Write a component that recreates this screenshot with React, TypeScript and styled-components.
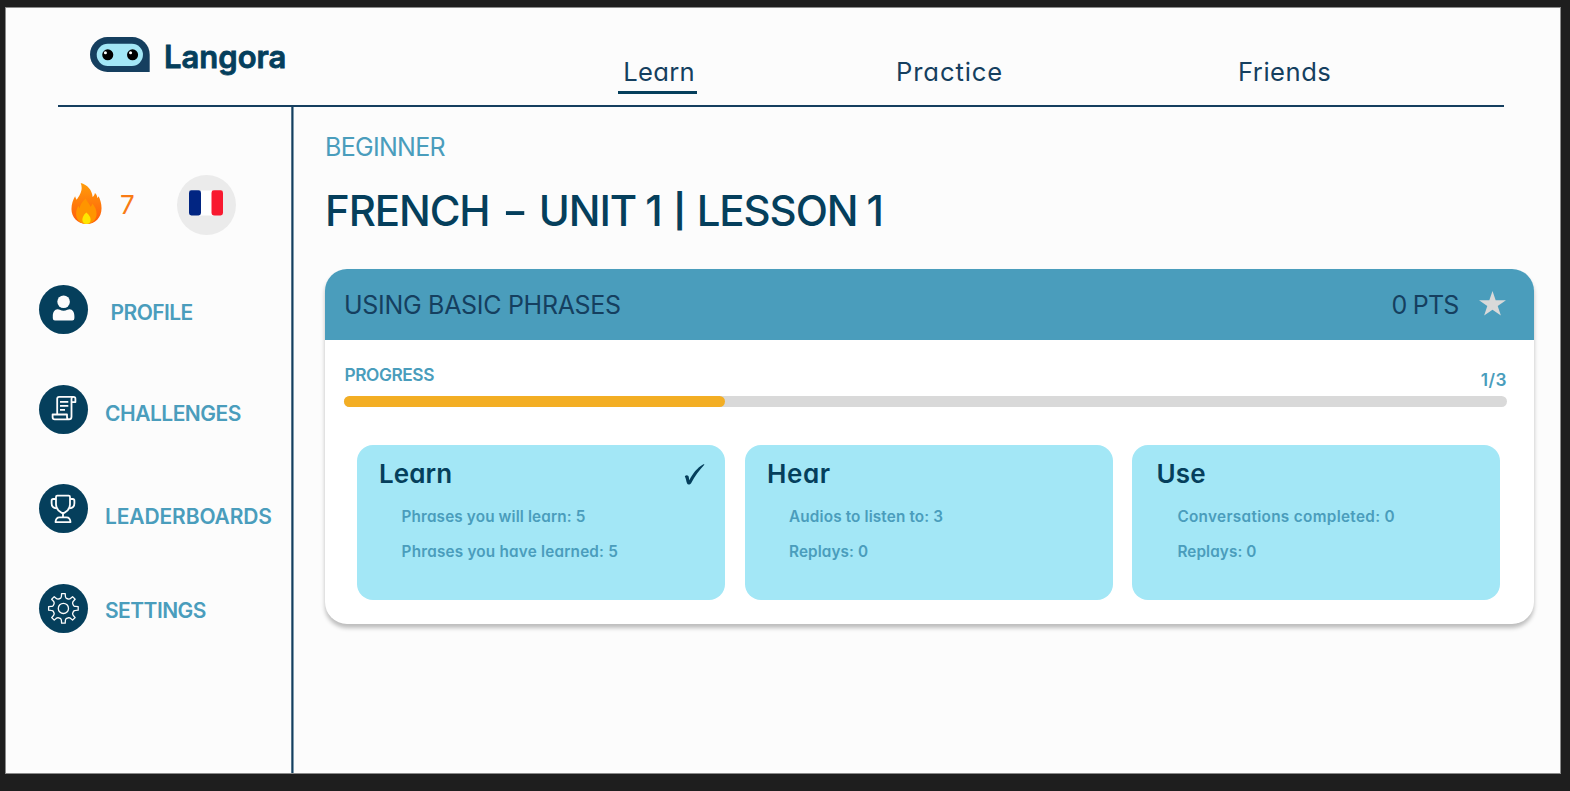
import React from "react";
import styled, { createGlobalStyle } from "styled-components";

const navy = "#053f5c";
const ink = "#153f5f";
const teal = "#4a9dbc";
const sky = "#a3e7f6";

const GlobalStyle = createGlobalStyle`
  * { box-sizing: border-box; }
  body {
    margin: 0;
    background: #1e1e1e;
    font-family: Inter, "Open Sans", sans-serif;
    font-feature-settings: "cv11";
  }
  h1, h2, p { margin: 0; }
`;

const Frame = styled.div`
  height: 791px;
  padding: 7px 9px 17px 5px;
`;
const Page = styled.div`
  display: flex;
  flex-direction: column;
  height: 767px;
  background: #fcfcfc;
  border: 1px solid #8b8b8b;
`;
const Header = styled.header`
  display: flex;
  height: 99px;
  margin: 0 56px 0 52px;
  padding-left: 32px;
  border-bottom: 2px solid ${ink};
`;
const Brand = styled.div`
  display: flex;
  width: 528px;
  padding-top: 29px;
  gap: 14px;
`;
const Wordmark = styled.span`
  font-size: 31px;
  line-height: 40px;
  font-weight: 600;
  font-feature-settings: normal;
  color: ${navy};
  -webkit-text-stroke: 0.8px ${navy};
`;
const Nav = styled.nav`
  display: grid;
  grid-template-columns: 278px 342px auto;
  align-items: start;
  padding-top: 48px;
`;
const NavItem = styled.a<{ $active?: boolean; $ls: number }>`
  justify-self: start;
  height: 38px;
  min-width: 79px;
  padding-left: ${(p) => (p.$active ? 5.3 : 0)}px;
  border-bottom: 3px solid ${(p) => (p.$active ? navy : "transparent")};
  font-size: 25.6px;
  line-height: 32px;
  color: ${ink};
  letter-spacing: ${(p) => p.$ls}px;
`;
const Body = styled.div`
  display: flex;
  flex: 1;
  min-height: 0;
`;
const Sidebar = styled.aside`
  width: 285px;
  padding: 68px 0 0 33px;
`;
const Divider = styled.div`
  width: 3px;
  background: linear-gradient(90deg, #56768c 0 1px, ${ink} 1px 2px, #7f9bad 2px 3px);
`;
const Stats = styled.div`
  display: flex;
  align-items: center;
  height: 60px;
  padding-left: 32px;
`;
const Streak = styled.span`
  width: 57px;
  margin: 0 0 2px 18px;
  font-size: 26px;
  color: #f97b14;
`;
const FlagBadge = styled.div`
  display: flex;
  justify-content: center;
  width: 59px;
  height: 60px;
  padding: 15px 1px 0 0;
  border-radius: 50%;
  background: #ebebeb;
`;
const Menu = styled.div`
  display: flex;
  flex-direction: column;
  gap: 50.5px;
  padding-top: 50.4px;
`;
const MenuItem = styled.a`
  display: flex;
  height: 49px;
`;
const Disc = styled.span`
  width: 49px;
  height: 49px;
  border-radius: 50%;
  background: ${navy};
`;
const MenuLabel = styled.span<{ $left: number; $top: number; $ls: number }>`
  margin: ${(p) => p.$top}px 0 0 ${(p) => p.$left}px;
  font-size: 21px;
  line-height: 24px;
  font-weight: 600;
  color: ${teal};
  letter-spacing: ${(p) => p.$ls}px;
  white-space: nowrap;
`;
const Main = styled.main`
  width: 1240px;
  padding: 24px 0 0 31px;
`;
const Level = styled.p`
  font-size: 25px;
  line-height: 32px;
  color: ${teal};
  letter-spacing: -0.7px;
`;
const Title = styled.h1`
  margin-top: 22px;
  font-size: 42px;
  line-height: 52px;
  font-weight: 500;
  color: ${navy};
  letter-spacing: -1.1px;
  word-spacing: -1px;
  white-space: nowrap;
`;
const Dash = styled.span`
  display: inline-block;
  width: 31px;
  text-align: center;
  transform: scaleX(1.35);
`;
const Bar = styled.span`
  display: inline-block;
  width: 17px;
  font-size: 33px;
  line-height: 40px;
  font-weight: 700;
  text-align: center;
  vertical-align: 3px;
`;
const Card = styled.section`
  height: 355px;
  margin-top: 32px;
  border-radius: 22px;
  background: #fff;
  box-shadow: 0 4px 4px rgba(0, 0, 0, 0.25);
`;
const CardHead = styled.div`
  display: flex;
  align-items: center;
  height: 71px;
  padding: 0 28px 0 19px;
  border-radius: 22px 22px 0 0;
  background: ${teal};
  font-size: 25px;
  color: ${ink};
`;
const CardName = styled.span`
  flex: 1;
  letter-spacing: -0.3px;
`;
const Points = styled.span`
  margin-right: 20.5px;
  letter-spacing: -0.8px;
`;
const CardBody = styled.div`
  padding: 24px 27px 0 19.4px;
`;
const ProgressRow = styled.div`
  display: flex;
  justify-content: space-between;
  height: 32px;
  font-size: 17.3px;
  line-height: 22px;
  font-weight: 600;
  color: ${teal};
`;
const ProgressLabel = styled.span`
  letter-spacing: -0.4px;
`;
const ProgressCount = styled.span`
  padding-top: 5px;
  letter-spacing: 0.5px;
`;
const Track = styled.div`
  height: 11px;
  border-radius: 6px;
  background: #d9d9d9;
`;
const Fill = styled.div`
  width: 381px;
  height: 11px;
  border-radius: 6px;
  background: #f3ae24;
`;
const Tiles = styled.div`
  display: grid;
  grid-template-columns: repeat(3, 368px);
  gap: 19.5px;
  padding: 38px 0 0 13px;
`;
const Tile = styled.div<{ $pad: number }>`
  height: 155px;
  padding: 12px 20px 0 ${(p) => p.$pad}px;
  border-radius: 16px;
  background: ${sky};
`;
const TileHead = styled.div`
  display: flex;
  justify-content: space-between;
  height: 34px;
  line-height: 34px;
  color: ${navy};
`;
const TileName = styled.h2<{ $ls: number }>`
  font-size: 26px;
  font-weight: 600;
  letter-spacing: ${(p) => p.$ls}px;
`;
const Facts = styled.div<{ $indent: number }>`
  padding: 11.5px 0 0 ${(p) => p.$indent}px;
`;
const Fact = styled.p<{ $ls: number }>`
  font-size: 15.3px;
  line-height: 27px;
  margin-bottom: 8.6px;
  font-weight: 600;
  color: ${teal};
  letter-spacing: ${(p) => p.$ls}px;
  white-space: nowrap;
`;

const LogoMark = styled.svg`
  margin-top: 0.3px;
`;
const Logo = () => (
  <LogoMark width="60" height="35" viewBox="271 112 179 104">
    <path d="M323 112h74a52 52 0 0 1 52 52v52H323a52 52 0 0 1 0-104z" fill={ink} />
    <rect x="291" y="132" width="138" height="66" rx="33" fill={sky} />
    <circle cx="324" cy="165" r="16.5" />
    <circle cx="398" cy="165" r="16.5" />
    <circle cx="317" cy="159" r="4.5" fill="#fff" />
    <circle cx="392" cy="159" r="4.5" fill="#fff" />
  </LogoMark>
);

const FlameMark = styled.svg`
  margin-bottom: 3.6px;
`;
const Flame = () => (
  <FlameMark width="31" height="41" viewBox="125 68 91 124">
    <defs>
      <linearGradient id="flame" x1="0" y1="0" x2="0" y2="1">
        <stop offset="0" stopColor="#ff9d0a" />
        <stop offset="1" stopColor="#ff5a0c" />
      </linearGradient>
    </defs>
    <path fill="url(#flame)" d="M153 68c20 6 34 20 36 42 4-3 6-7 7-12 5 4 7 9 7 15 2-1 3-3 4-5 5 10 9 22 9 36 0 28-19 48-46 48s-45-20-45-45c0-16 5-28 11-39 1 4 3 8 5 11 10-17 20-29 12-51z" />
    <path fill="#ff9500" d="M168 115c4 10 11 14 15 25 3-3 4-6 5-10 8 9 13 20 13 31 0 18-12 31-31 31s-31-13-31-30c0-10 3-19 7-25 1 3 2 5 4 7 2-14 10-20 18-29z" />
    <path fill="#ffe600" d="M170 157c8 7 13 14 13 22s-5 13-13 13-12-6-12-13 4-16 12-22z" />
  </FlameMark>
);

const Flag = () => (
  <svg width="34" height="26" viewBox="0 0 34 26">
    <rect x="8" y="0.5" width="18" height="25" fill="#fff" />
    <rect x="0" y="0.3" width="12" height="25.2" rx="2.4" fill="#012582" />
    <rect x="22.5" y="0.3" width="11.5" height="25.2" rx="2.4" fill="#f8192f" />
  </svg>
);

const StarMark = styled.svg`
  margin-bottom: 2px;
`;
const Star = () => (
  <StarMark width="27" height="25" viewBox="0 0 28 26">
    <path fill="#d9d9d9" d="M14 0l3.3 9.7H28l-8.6 6 3.3 9.8L14 19.6l-8.7 5.9 3.3-9.8L0 9.7h10.7z" />
  </StarMark>
);

const Check = () => (
  <svg width="21" height="34" viewBox="0 0 21 34">
    <path fill={navy} d="M0.8 19.3c1.6-1.7 3.7-1 4 .9l.5 3.1C8.7 16.6 13 10.9 19.4 7.3c.8-.4 1.2.1.7.7-4.7 4.8-9.2 11.3-13 18.2-.8 1.500-3.400 2-4 .4C2.100 24.100 2 21.300.800 19.300z" />
  </svg>
);

const ProfileIcon = () => (
  <svg width="49" height="49" viewBox="0 0 49 49" fill="#fcfcfc">
    <circle cx="24.6" cy="16.7" r="6.3" />
    <path d="M18.6 24.2q1.2 0 2.2.6 3.8 1.8 7.6 0 1-.6 2.2-.6c3 0 4.8 3 4.8 7v2q0 2.2-2.2 2.2H16q-2.2 0-2.2-2.2v-2c0-4 1.8-7 4.8-7z" />
  </svg>
);

const ScrollIcon = () => (
  <svg width="49" height="49" viewBox="0 0 49 49" fill="none" stroke="#fcfcfc" strokeWidth="1.8" strokeLinejoin="round">
    <path d="M18.2 29.3V13.8q0-2 2-2h14.3q1.9 0 1.9 1.9v3.4h-3.9" />
    <path d="M34.5 11.8q-2 0-2 2v18q0 2.6-2.5 2.6H15.8q-2.2 0-2.2-2.4v-2.5H28v2.4q0 2.3 2 2.5" />
    <path d="M21 16.8h8.3M21 20.8h8.3M21 24.8h5" />
  </svg>
);

const TrophyIcon = () => (
  <svg width="49" height="49" viewBox="0 0 49 49" fill="none" stroke="#fcfcfc" strokeWidth="1.8" strokeLinejoin="round">
    <path d="M18.3 11.6h11.4q1.3 0 1.3 1.3v7.7c0 4-2.2 6.3-5.4 8q-1.6.8-3.2 0c-3.2-1.7-5.4-4-5.4-8v-7.7q0-1.300 1.300-1.300z" />
    <path d="M17 15h-2.700q-1.700 0-1.700 1.700v2.500c0 3 1.700 4.700 5 5.200M31 15h2.700q1.700 0 1.700 1.700v2.500c0 3-1.700 4.700-5 5.200" />
    <path d="M24 29v4.300M20.500 33.300h7q3.700 0 4 4.800h-15q.3-4.800 4-4.800z" />
  </svg>
);

// Eight flared teeth around the hub, each spanning 45 degrees.
const gearPath = (() => {
  const at = (r: number, deg: number) => {
    const a = ((deg - 90) * Math.PI) / 180;
    return `${(24.4 + r * Math.cos(a)).toFixed(2)} ${(24.4 + r * Math.sin(a)).toFixed(2)}`;
  };
  let d = "";
  for (let i = 0; i < 8; i++) {
    const c = i * 45;
    d += `${i ? "L" : "M"}${at(10.6, c - 15)}Q${at(11.4, c - 10)} ${at(12.5, c - 9)}L${at(14.9, c - 7)}L${at(14.9, c + 7)}L${at(12.5, c + 9)}Q${at(11.4, c + 10)} ${at(10.6, c + 15)}Q${at(10.3, c + 22.5)} ${at(10.6, c + 30)}`;
  }
  return d + "Z";
})();
const GearIcon = () => (
  <svg width="49" height="49" viewBox="0 0 49 49" fill="none" stroke="#fcfcfc" strokeWidth="1.3" strokeLinejoin="round">
    <path d={gearPath} />
    <circle cx="24.4" cy="24.4" r="5.1" />
  </svg>
);

const menu = [
  { label: "PROFILE", icon: <ProfileIcon />, left: 22.5, top: 15.6, ls: -0.55 },
  { label: "CHALLENGES", icon: <ScrollIcon />, left: 17, top: 17.2, ls: -0.5 },
  { label: "LEADERBOARDS", icon: <TrophyIcon />, left: 17, top: 20.6, ls: -0.13 },
  { label: "SETTINGS", icon: <GearIcon />, left: 17, top: 15.4, ls: -0.55 },
];

interface TileData {
  name: string;
  done?: boolean;
  pad: number;
  indent: number;
  ls: number;
  facts: { text: string; ls: number }[];
}
const tiles: TileData[] = [
  {
    name: "Learn", done: true, pad: 21.5, indent: 22.7, ls: 0.1,
    facts: [{ text: "Phrases you will learn: 5", ls: 0.13 }, { text: "Phrases you have learned: 5", ls: 0.2 }],
  },
  {
    name: "Hear", pad: 22.2, indent: 22, ls: 0.6,
    facts: [{ text: "Audios to listen to: 3", ls: 0.14 }, { text: "Replays: 0", ls: 0.1 }],
  },
  {
    name: "Use", pad: 24.2, indent: 20.8, ls: 0.1,
    facts: [{ text: "Conversations completed: 0", ls: 0.33 }, { text: "Replays: 0", ls: 0.1 }],
  },
];

export default function App() {
  return (
    <Frame>
      <GlobalStyle />
      <Page>
        <Header>
          <Brand>
            <Logo />
            <Wordmark>Langora</Wordmark>
          </Brand>
          <Nav>
            <NavItem $active $ls={0.3}>Learn</NavItem>
            <NavItem $ls={0.9}>Practice</NavItem>
            <NavItem $ls={0.5}>Friends</NavItem>
          </Nav>
        </Header>
        <Body>
          <Sidebar>
            <Stats>
              <Flame />
              <Streak>7</Streak>
              <FlagBadge><Flag /></FlagBadge>
            </Stats>
            <Menu>
              {menu.map((m) => (
                <MenuItem key={m.label}>
                  <Disc>{m.icon}</Disc>
                  <MenuLabel $left={m.left} $top={m.top} $ls={m.ls}>{m.label}</MenuLabel>
                </MenuItem>
              ))}
            </Menu>
          </Sidebar>
          <Divider />
          <Main>
            <Level>BEGINNER</Level>
            <Title>FRENCH <Dash>-</Dash> UNIT 1 <Bar>|</Bar> LESSON 1</Title>
            <Card>
              <CardHead>
                <CardName>USING BASIC PHRASES</CardName>
                <Points>0 PTS</Points>
                <Star />
              </CardHead>
              <CardBody>
                <ProgressRow>
                  <ProgressLabel>PROGRESS</ProgressLabel>
                  <ProgressCount>1/3</ProgressCount>
                </ProgressRow>
                <Track><Fill /></Track>
                <Tiles>
                  {tiles.map((t) => (
                    <Tile key={t.name} $pad={t.pad}>
                      <TileHead>
                        <TileName $ls={t.ls}>{t.name}</TileName>
                        {t.done && <Check />}
                      </TileHead>
                      <Facts $indent={t.indent}>
                        {t.facts.map((f) => (
                          <Fact key={f.text} $ls={f.ls}>{f.text}</Fact>
                        ))}
                      </Facts>
                    </Tile>
                  ))}
                </Tiles>
              </CardBody>
            </Card>
          </Main>
        </Body>
      </Page>
    </Frame>
  );
}
